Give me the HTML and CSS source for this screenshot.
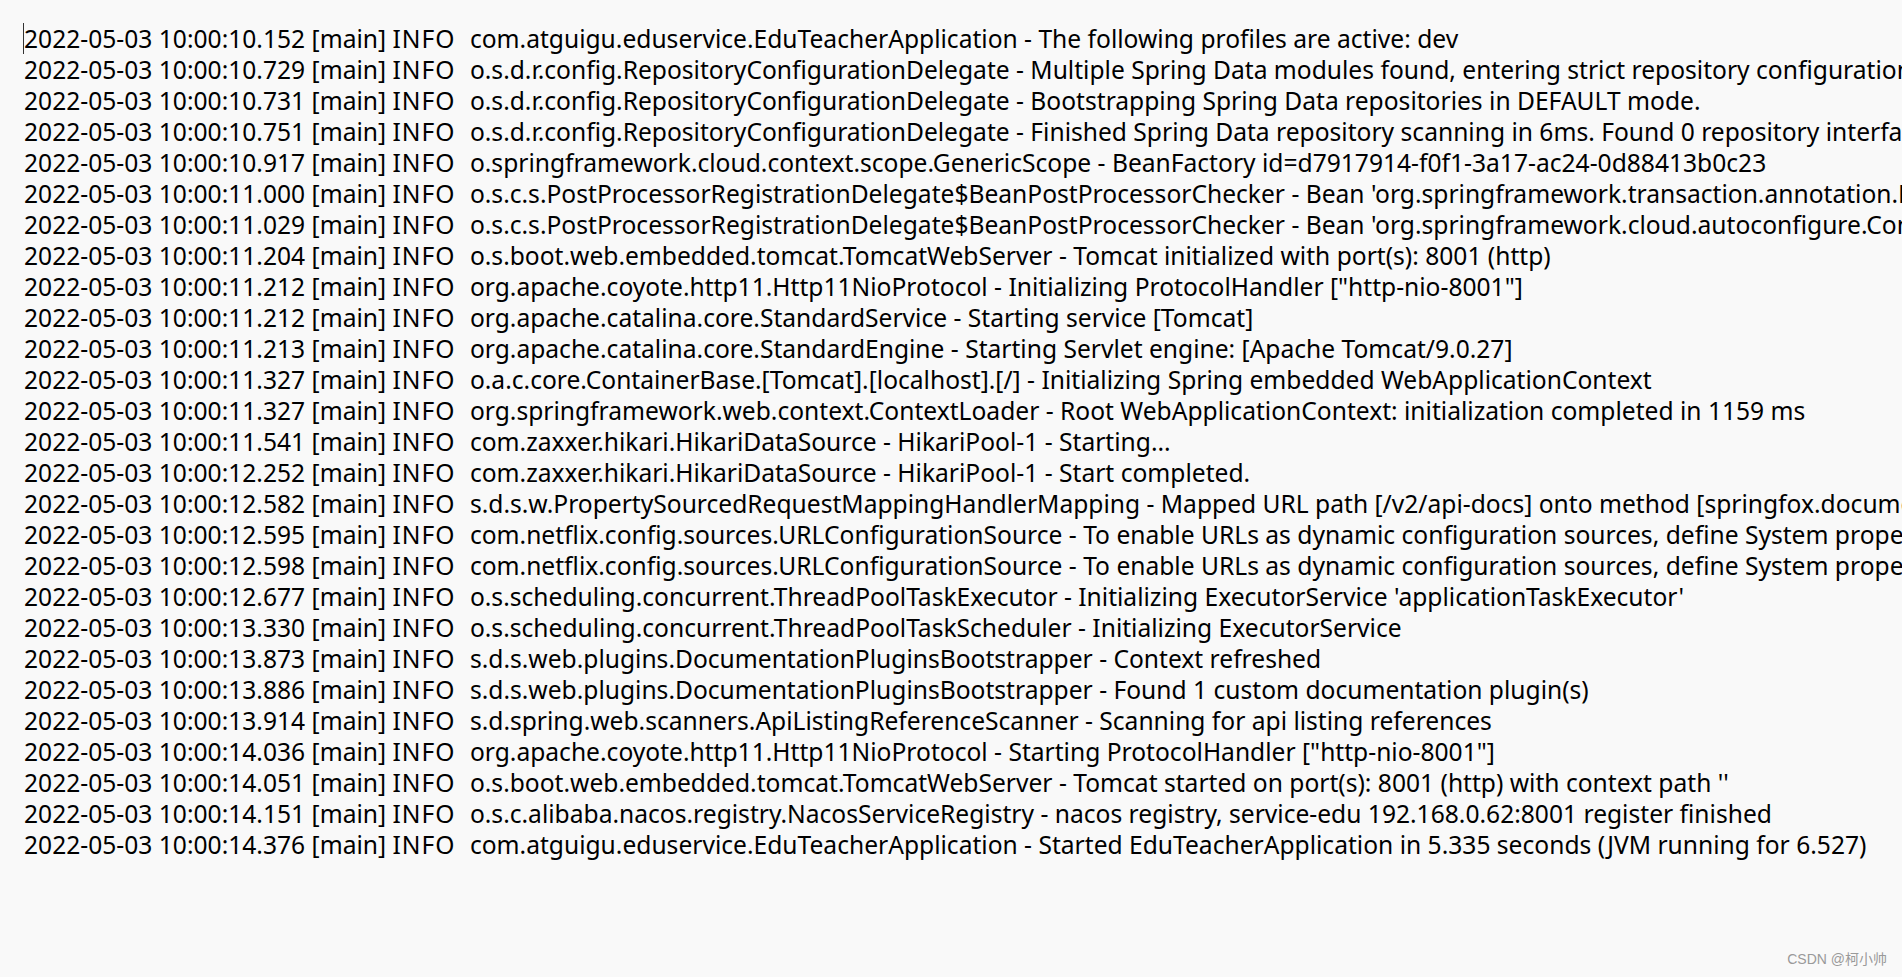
FILE: index.html
```html
<!DOCTYPE html>
<html lang="en">
<head>
	<meta charset="UTF-8">
	<title>EduTeacherApplication log</title>
	<link rel="stylesheet" href="styles.css">
</head>
<body>
	<main class="console">
		<span class="caret"></span>
		<div class="line">2022-05-03 10:00:10.152 [main] <span class="lvl">INFO</span> com.atguigu.eduservice.EduTeacherApplication - The following profiles are active: dev</div>
		<div class="line">2022-05-03 10:00:10.729 [main] <span class="lvl">INFO</span> o.s.d.r.config.RepositoryConfigurationDelegate - Multiple Spring Data modules found, entering strict repository configuration mode!</div>
		<div class="line">2022-05-03 10:00:10.731 [main] <span class="lvl">INFO</span> o.s.d.r.config.RepositoryConfigurationDelegate - Bootstrapping Spring Data repositories in DEFAULT mode.</div>
		<div class="line">2022-05-03 10:00:10.751 [main] <span class="lvl">INFO</span> o.s.d.r.config.RepositoryConfigurationDelegate - Finished Spring Data repository scanning in 6ms. Found 0 repository interfaces.</div>
		<div class="line">2022-05-03 10:00:10.917 [main] <span class="lvl">INFO</span> o.springframework.cloud.context.scope.GenericScope - BeanFactory id=d7917914-f0f1-3a17-ac24-0d88413b0c23</div>
		<div class="line">2022-05-03 10:00:11.000 [main] <span class="lvl">INFO</span> o.s.c.s.PostProcessorRegistrationDelegate$BeanPostProcessorChecker - Bean 'org.springframework.transaction.annotation.ProxyTransactionManagementConfiguration'</div>
		<div class="line">2022-05-03 10:00:11.029 [main] <span class="lvl">INFO</span> o.s.c.s.PostProcessorRegistrationDelegate$BeanPostProcessorChecker - Bean 'org.springframework.cloud.autoconfigure.ConfigurationPropertiesRebinderAutoConfiguration'</div>
		<div class="line">2022-05-03 10:00:11.204 [main] <span class="lvl">INFO</span> o.s.boot.web.embedded.tomcat.TomcatWebServer - Tomcat initialized with port(s): 8001 (http)</div>
		<div class="line">2022-05-03 10:00:11.212 [main] <span class="lvl">INFO</span> org.apache.coyote.http11.Http11NioProtocol - Initializing ProtocolHandler ["http-nio-8001"]</div>
		<div class="line">2022-05-03 10:00:11.212 [main] <span class="lvl">INFO</span> org.apache.catalina.core.StandardService - Starting service [Tomcat]</div>
		<div class="line">2022-05-03 10:00:11.213 [main] <span class="lvl">INFO</span> org.apache.catalina.core.StandardEngine - Starting Servlet engine: [Apache Tomcat/9.0.27]</div>
		<div class="line">2022-05-03 10:00:11.327 [main] <span class="lvl">INFO</span> o.a.c.core.ContainerBase.[Tomcat].[localhost].[/] - Initializing Spring embedded WebApplicationContext</div>
		<div class="line">2022-05-03 10:00:11.327 [main] <span class="lvl">INFO</span> org.springframework.web.context.ContextLoader - Root WebApplicationContext: initialization completed in 1159 ms</div>
		<div class="line">2022-05-03 10:00:11.541 [main] <span class="lvl">INFO</span> com.zaxxer.hikari.HikariDataSource - HikariPool-1 - Starting...</div>
		<div class="line">2022-05-03 10:00:12.252 [main] <span class="lvl">INFO</span> com.zaxxer.hikari.HikariDataSource - HikariPool-1 - Start completed.</div>
		<div class="line">2022-05-03 10:00:12.582 [main] <span class="lvl">INFO</span> s.d.s.w.PropertySourcedRequestMappingHandlerMapping - Mapped URL path [/v2/api-docs] onto method [springfox.documentation.swagger2.web.Swagger2Controller]</div>
		<div class="line">2022-05-03 10:00:12.595 [main] <span class="lvl">INFO</span> com.netflix.config.sources.URLConfigurationSource - To enable URLs as dynamic configuration sources, define System property archaius.configurationSource.additionalUrls</div>
		<div class="line">2022-05-03 10:00:12.598 [main] <span class="lvl">INFO</span> com.netflix.config.sources.URLConfigurationSource - To enable URLs as dynamic configuration sources, define System property archaius.configurationSource.additionalUrls</div>
		<div class="line">2022-05-03 10:00:12.677 [main] <span class="lvl">INFO</span> o.s.scheduling.concurrent.ThreadPoolTaskExecutor - Initializing ExecutorService 'applicationTaskExecutor'</div>
		<div class="line">2022-05-03 10:00:13.330 [main] <span class="lvl">INFO</span> o.s.scheduling.concurrent.ThreadPoolTaskScheduler - Initializing ExecutorService</div>
		<div class="line">2022-05-03 10:00:13.873 [main] <span class="lvl">INFO</span> s.d.s.web.plugins.DocumentationPluginsBootstrapper - Context refreshed</div>
		<div class="line">2022-05-03 10:00:13.886 [main] <span class="lvl">INFO</span> s.d.s.web.plugins.DocumentationPluginsBootstrapper - Found 1 custom documentation plugin(s)</div>
		<div class="line">2022-05-03 10:00:13.914 [main] <span class="lvl">INFO</span> s.d.spring.web.scanners.ApiListingReferenceScanner - Scanning for api listing references</div>
		<div class="line">2022-05-03 10:00:14.036 [main] <span class="lvl">INFO</span> org.apache.coyote.http11.Http11NioProtocol - Starting ProtocolHandler ["http-nio-8001"]</div>
		<div class="line">2022-05-03 10:00:14.051 [main] <span class="lvl">INFO</span> o.s.boot.web.embedded.tomcat.TomcatWebServer - Tomcat started on port(s): 8001 (http) with context path ''</div>
		<div class="line">2022-05-03 10:00:14.151 [main] <span class="lvl">INFO</span> o.s.c.alibaba.nacos.registry.NacosServiceRegistry - nacos registry, service-edu 192.168.0.62:8001 register finished</div>
		<div class="line">2022-05-03 10:00:14.376 [main] <span class="lvl">INFO</span> com.atguigu.eduservice.EduTeacherApplication - Started EduTeacherApplication in 5.335 seconds (JVM running for 6.527)</div>
	</main>
	<footer class="mark">CSDN @柯小帅</footer>
</body>
</html>
```

FILE: styles.css
```css
html, body {
	height: 100%;
	margin: 0;
	overflow: hidden;
}
body {
	background: #f9f9f9;
	color: #000;
	display: flex;
	flex-direction: column;
}
main.console {
	flex: 1;
	font: 24.6px/31px "Noto Sans", sans-serif;
	min-height: 0;
	overflow: hidden;
	padding: 23px 0 0 24px;
	position: relative;
}
main.console .line {
	white-space: pre;
}
main.console .line .lvl {
	display: inline-block;
	letter-spacing: 1px;
	margin-right: 8px;
}
main.console .caret {
	border-left: 1px solid #333;
	height: 31px;
	position: absolute;
	top: 23px; left: 23px;
}
footer.mark {
	color: #9a9a9a;
	font: 14px "Liberation Sans", "Noto Sans CJK SC", sans-serif;
	padding: 0 15px 9px 0;
	text-align: right;
}
```
